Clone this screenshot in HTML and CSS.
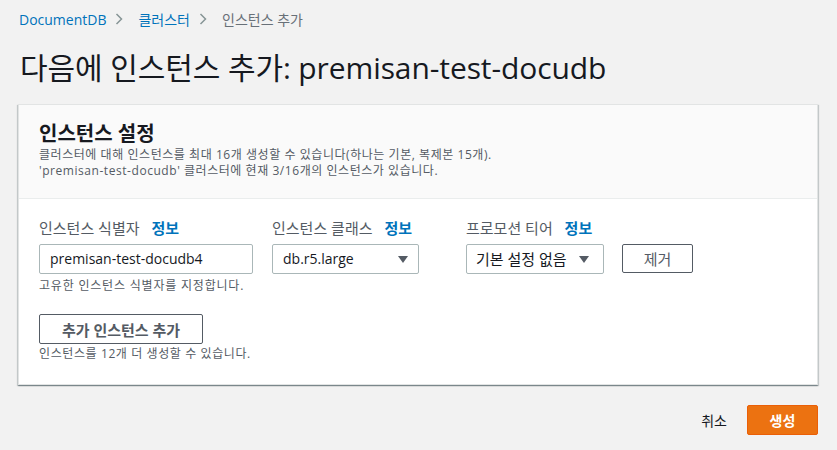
FILE: index.html
```html
<!DOCTYPE html>
<html lang="ko">
<head>
<meta charset="utf-8">
<link rel="stylesheet" href="styles.css">
</head>
<body>
<div class="page">
  <nav class="crumbs">
    <a class="crumb-link">DocumentDB</a>
    <svg class="chev" width="10" height="14" viewBox="0 0 10 14"><path d="M2.5 2 L7.5 7 L2.5 12" fill="none" stroke="#879596" stroke-width="1.5"/></svg>
    <a class="crumb-link">클러스터</a>
    <svg class="chev" width="10" height="14" viewBox="0 0 10 14"><path d="M2.5 2 L7.5 7 L2.5 12" fill="none" stroke="#879596" stroke-width="1.5"/></svg>
    <span class="crumb-current">인스턴스 추가</span>
  </nav>
  <h1 class="title">다음에 인스턴스 추가: premisan-test-docudb</h1>
  <section class="card">
    <header class="card-head">
      <h2 class="card-title">인스턴스 설정</h2>
      <p class="card-desc">클러스터에 대해 인스턴스를 최대 16개 생성할 수 있습니다(하나는 기본, 복제본 15개).</p>
      <p class="card-desc">'premisan-test-docudb' 클러스터에 현재 3/16개의 인스턴스가 있습니다.</p>
    </header>
    <div class="card-body">
      <div class="row">
        <div class="field f-id">
          <div class="label">인스턴스 식별자 <span class="info">정보</span></div>
          <div class="input">premisan-test-docudb4</div>
          <div class="hint hint-id">고유한 인스턴스 식별자를 지정합니다.</div>
        </div>
        <div class="field f-class">
          <div class="label">인스턴스 클래스 <span class="info">정보</span></div>
          <div class="input select"><span>db.r5.large</span><span class="caret"></span></div>
        </div>
        <div class="field f-tier">
          <div class="label">프로모션 티어 <span class="info">정보</span></div>
          <div class="input select ko"><span>기본 설정 없음</span><span class="caret"></span></div>
        </div>
        <div class="field f-remove">
          <button class="btn btn-remove">제거</button>
        </div>
      </div>
      <button class="btn btn-add">추가 인스턴스 추가</button>
      <div class="hint hint-add">인스턴스를 12개 더 생성할 수 있습니다.</div>
    </div>
  </section>
  <div class="actions">
    <span class="cancel">취소</span>
    <button class="btn btn-primary">생성</button>
  </div>
</div>
</body>
</html>
```
FILE: styles.css
```css
* { box-sizing: border-box; }
html, body { margin: 0; padding: 0; }
body {
  background: #f2f2f2;
  font-family: "Open Sans", "Noto Sans CJK KR", sans-serif;
  color: #16191f;
  width: 837px;
  height: 450px;
  overflow: hidden;
}
.page { padding: 8px 19px 0 18px; }
.crumbs {
  display: flex;
  align-items: center;
  gap: 10px;
  font-size: 14px;
  height: 22px;
  padding-left: 1px;
}
.crumb-link { color: #0073bb; }
.crumb-current { color: #687078; }
.chev { display: block; margin: 0 4px 0 -2px; }
.title {
  font-size: 30px;
  font-weight: 400;
  margin: 18px 0 0 2px;
  line-height: 40px;
  letter-spacing: -0.1px;
  color: #16191f;
}
.card {
  margin-top: 16px;
  background: #fff;
  border: 1px solid #e2e4e4;
  box-shadow: 0 1px 1px 0 rgba(0,28,36,0.3), 1px 1px 1px 0 rgba(0,28,36,0.15), -1px 1px 1px 0 rgba(0,28,36,0.15);
  height: 281px;
}
.card-head {
  background: #fafafa;
  border-bottom: 1px solid #eaeded;
  height: 94px;
  padding: 15px 20px 0 20px;
}
.card-title {
  margin: 0;
  font-size: 20px;
  font-weight: 700;
  line-height: 27px;
}
.card-desc {
  margin: 0;
  font-size: 12px;
  line-height: 16px;
  letter-spacing: 0.55px;
  color: #545b64;
}
.card-body { padding: 19px 20px 0 20px; }
.row { display: flex; align-items: flex-start; }
.field { display: flex; flex-direction: column; }
.f-id { width: 214px; margin-right: 19px; }
.f-class { width: 147px; margin-right: 47px; }
.f-tier { width: 138px; margin-right: 20px; }
.f-remove { padding-top: 26px; }
.label {
  font-size: 15px;
  line-height: 20px;
  color: #545b64;
  margin-bottom: 6px;
  white-space: nowrap;
}
.info {
  color: #0073bb;
  font-weight: 700;
  margin-left: 8px;
}
.input {
  height: 30px;
  border: 1px solid #aab7b8;
  border-radius: 2px;
  background: #fff;
  font-size: 14px;
  line-height: 28px;
  padding: 0 10px;
  color: #16191f;
  white-space: nowrap;
}
.select { display: flex; justify-content: space-between; align-items: center; }
.select.ko { font-size: 15px; padding: 0 14px 0 9px; }
.caret {
  width: 0; height: 0;
  border-left: 5px solid transparent;
  border-right: 5px solid transparent;
  border-top: 7px solid #545b64;
  margin-top: 1px;
}
.hint {
  font-size: 12px;
  line-height: 16px;
  letter-spacing: 0.6px;
  color: #545b64;
  margin-top: 4px;
  white-space: nowrap;
}
.hint-id { letter-spacing: 0.8px; }
.hint-add { margin-top: 2px; }
.btn {
  font-family: "Open Sans", "Noto Sans CJK KR", sans-serif;
  font-size: 15px;
  font-weight: 700;
  background: #fff;
  border: 1px solid #545b64;
  border-radius: 2px;
  color: #545b64;
  padding: 0;
  height: 29px;
  cursor: pointer;
}
.btn-remove { width: 71px; font-weight: 400; margin-left: -2px; }
.btn-add { width: 164px; margin-top: 20px; height: 30px; }
.actions {
  display: flex;
  justify-content: flex-end;
  align-items: center;
  gap: 20px;
  margin-top: 20px;
}
.cancel { font-size: 14px; font-weight: 400; color: #16191f; }
.btn-primary {
  width: 71px;
  height: 30px;
  font-size: 14px;
  background: #ec7211;
  border-color: #eb5f07;
  color: #fff;
}
```
